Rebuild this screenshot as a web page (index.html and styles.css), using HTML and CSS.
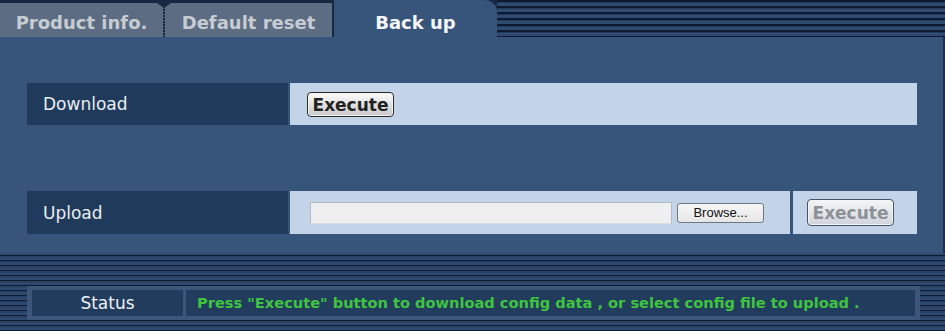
FILE: index.html
```html
<!DOCTYPE html>
<html>
<head>
<meta charset="utf-8">
<link rel="stylesheet" href="styles.css">
</head>
<body>
<div class="page">
  <div class="header">
    <div class="tabs">
      <div class="tab tab-inactive tab-first">Product info.</div>
      <div class="tab tab-inactive tab-second">Default reset</div>
      <div class="tab tab-active">Back up</div>
    </div>
    <div class="stripes-top"></div>
  </div>
  <div class="panel">
    <div class="row row-download">
      <div class="cell-label">Download</div>
      <div class="cell-value">
        <button class="btn-exec">Execute</button>
      </div>
    </div>
    <div class="row row-upload">
      <div class="cell-label">Upload</div>
      <div class="cell-value cell-file">
        <span class="file-input"></span>
        <button class="btn-browse">Browse...</button>
      </div>
      <div class="cell-value cell-exec">
        <button class="btn-exec btn-disabled">Execute</button>
      </div>
    </div>
  </div>
  <div class="footer">
    <div class="status-box">
      <div class="status-label">Status</div>
      <div class="status-text">Press "Execute" button to download config data , or select config file to upload .</div>
    </div>
  </div>
</div>
</body>
</html>
```
FILE: styles.css
```css
html, body {
  margin: 0;
  padding: 0;
}
body {
  width: 945px;
  height: 331px;
  overflow: hidden;
  background: #0e1a31;
  font-family: "DejaVu Sans", Verdana, sans-serif;
}
.page {
  width: 945px;
  height: 331px;
  display: flex;
  flex-direction: column;
}

/* header */
.header {
  display: flex;
  height: 37px;
}
.tabs {
  display: flex;
  align-items: flex-end;
  background: #172842;
}
.tab {
  box-sizing: border-box;
  font-weight: bold;
  font-size: 18px;
  text-align: center;
}
.tab-inactive {
  height: 34px;
  background: #5b6c83;
  color: #c7ccd3;
  padding-top: 10px;
  line-height: 20px;
  position: relative;
}
.tab-first {
  width: 163px;
}
.tab-second {
  width: 167px;
  margin-left: 2px;
}
.tab-second::before {
  content: "";
  position: absolute;
  left: -2px;
  top: 0;
  bottom: 0;
  width: 2px;
  background: repeating-linear-gradient(to bottom, #1a2640 0 2px, #4b5b72 2px 3px);
}
.tab-second::after {
  content: "";
  position: absolute;
  left: -8px;
  top: 0;
  width: 0;
  height: 0;
  border-left: 7px solid transparent;
  border-right: 7px solid transparent;
  border-top: 5px solid #172842;
}
.tab-active {
  width: 163px;
  height: 37px;
  margin-left: 2px;
  background: #37547a;
  color: #f4f6f9;
  padding-top: 13px;
  line-height: 20px;
  border-top-right-radius: 12px;
}
.stripes-top {
  flex: 1;
  background: repeating-linear-gradient(to bottom, #0e1a31 0 2px, #213a5e 2px 3px, #2f4b72 3px 6px);
}

/* panel */
.panel {
  height: 216px;
  box-sizing: border-box;
  background: #37547a;
  padding: 46px 26px 0 27px;
  border-right: 2px solid #1d2f4c;
  display: flex;
  flex-direction: column;
  gap: 66px;
}
.row {
  display: flex;
  height: 42px;
}
.row-upload {
  height: 43px;
}
.cell-label {
  width: 261px;
  flex: none;
  background: #203a5b;
  color: #e9edf2;
  font-size: 17px;
  padding-left: 16px;
  box-sizing: border-box;
  display: flex;
  align-items: center;
}
.cell-value {
  margin-left: 2px;
  flex: 1;
  background: #c3d4e8;
  display: flex;
  align-items: center;
  padding-left: 17px;
}
.cell-file {
  flex: none;
  width: 500px;
  box-sizing: border-box;
  padding-left: 20px;
}
.cell-exec {
  margin-left: 3px;
  padding-left: 14px;
}
.btn-exec {
  width: 87px;
  height: 25px;
  box-sizing: border-box;
  border: 1px solid #2c2c2c;
  border-radius: 4px;
  background: linear-gradient(to bottom, #fbfbfb 0%, #e2e2e2 50%, #c9c9c9 100%);
  box-shadow: inset 0 0 0 1px #f4f4f4;
  font-family: "DejaVu Sans", Verdana, sans-serif;
  font-weight: bold;
  font-size: 17px;
  color: #222;
  padding: 0;
  line-height: 22px;
  margin-top: 1px;
}
.btn-disabled {
  height: 27px;
  color: #8d9095;
  border-color: #4a5566;
  background: linear-gradient(to bottom, #f3f5f7 0%, #dfe3e8 60%, #cfd4da 100%);
  margin-top: 0;
}
.file-input {
  display: block;
  width: 362px;
  height: 22px;
  box-sizing: border-box;
  background: #efefef;
  border: 1px solid #b3bac5;
  border-bottom-color: #d9dee5;
}
.btn-browse {
  margin-left: 5px;
  width: 87px;
  height: 20px;
  box-sizing: border-box;
  border: 1px solid #6f7784;
  border-radius: 3px;
  background: linear-gradient(to bottom, #f7f7f7 0%, #e6e6e6 100%);
  font-family: "Liberation Sans", Arial, sans-serif;
  font-size: 13px;
  color: #111;
  padding: 0;
  line-height: 18px;
}

/* footer */
.footer {
  flex: 1;
  background: repeating-linear-gradient(to bottom, #2f4a70 0 2px, #0e1a31 2px 3px, #294366 3px 5px);
  padding: 33px 0 0 27px;
  box-sizing: border-box;
}
.status-box {
  width: 893px;
  height: 34px;
  box-sizing: border-box;
  background: #3b5679;
  padding: 4px 5px 4px 5px;
  display: flex;
  gap: 3px;
}
.status-label {
  width: 151px;
  flex: none;
  background: #223c5e;
  color: #eef1f5;
  font-size: 17px;
  text-align: center;
  line-height: 26px;
}
.status-text {
  flex: 1;
  background: #223c5e;
  color: #3fc43f;
  font-weight: bold;
  font-size: 14.6px;
  line-height: 26px;
  padding-left: 11px;
  white-space: nowrap;
  overflow: hidden;
}
```
